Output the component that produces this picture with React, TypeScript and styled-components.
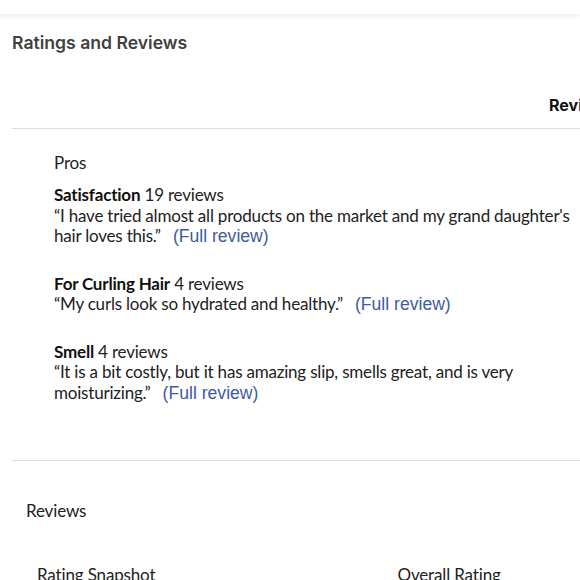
import styled, { createGlobalStyle } from "styled-components";

const Global = createGlobalStyle`
  html, body {
    margin: 0;
    padding: 0;
    background: #fff;
    overflow: hidden;
  }
  body {
    font-family: "Lato", "Noto Sans", sans-serif;
    color: #222;
  }
`;

// ── page chrome ───────────────────────────────────────────────────────────────

const TopBar = styled.div`
  height: 14px;
  background: #fff;
  box-shadow: 0 2px 5px rgba(0, 0, 0, 0.09);
`;

const Title = styled.h2`
  margin: 17px 0 0 12px;
  font-family: "Inter", "Roboto", sans-serif;
  font-size: 17.6px;
  font-weight: 600;
  line-height: 24px;
  color: #414141;
`;

const TabRow = styled.div`
  display: flex;
  padding: 40px 0 0 549px;
  height: 73px;
  box-sizing: border-box;
  white-space: nowrap;
`;

const Tab = styled.span`
  font-family: "Inter", "Roboto", sans-serif;
  font-size: 16px;
  font-weight: 700;
  line-height: 20px;
  color: #111;
`;

const Divider = styled.hr`
  margin: 0 0 0 12px;
  border: none;
  border-top: 1px solid #dcdcdc;
`;

// ── pros ──────────────────────────────────────────────────────────────────────

const Pros = styled.section`
  display: flex;
  flex-direction: column;
  gap: 27px;
  padding: 24px 0 57px 54px;
  letter-spacing: -0.2px;
`;

const Label = styled.div`
  font-size: 17px;
  line-height: 20px;
  color: #222;
  letter-spacing: -0.15px;
`;

const ProsLabel = styled(Label)`
  margin-bottom: -15px;
`;

const ProItem = styled.div`
  font-size: 17px;
  line-height: 20.5px;
  color: #222;
  white-space: nowrap;
`;

const ProName = styled.strong`
  font-weight: 700;
  color: #111;
`;

const Quote = styled.div`
  white-space: normal;
  width: 540px;
`;

const FullLink = styled.a`
  margin-left: 12px;
  font-family: "Liberation Sans", Arial, sans-serif;
  font-size: 17.6px;
  letter-spacing: 0;
  color: #3e5b9f;
  text-decoration: none;
`;

// ── reviews ───────────────────────────────────────────────────────────────────

const Reviews = styled.section`
  padding: 40px 0 0 26px;
`;

const SnapshotRow = styled.div`
  display: flex;
  margin-top: 44px;
  padding-left: 11px;
`;

const SnapshotCol = styled.div<{ $w: number }>`
  width: ${(p) => p.$w}px;
  font-size: 17px;
  line-height: 20px;
  letter-spacing: -0.15px;
  color: #222;
  white-space: nowrap;
`;

const pros = [
  {
    name: "Satisfaction",
    count: 19,
    quote:
      "“I have tried almost all products on the market and my grand daughter's hair loves this.”",
  },
  {
    name: "For Curling Hair",
    count: 4,
    quote: "“My curls look so hydrated and healthy.”",
  },
  {
    name: "Smell",
    count: 4,
    quote:
      "“It is a bit costly, but it has amazing slip, smells great, and is very moisturizing.”",
  },
];

export default function App() {
  return (
    <>
      <Global />
      <TopBar />
      <Title>Ratings and Reviews</Title>
      <TabRow>
        <Tab>Reviews</Tab>
      </TabRow>
      <Divider />

      <Pros>
        <ProsLabel>Pros</ProsLabel>
        {pros.map((p) => (
          <ProItem key={p.name}>
            <ProName>{p.name}</ProName> {p.count} reviews
            <Quote>
              {p.quote}
              <FullLink href="#">(Full review)</FullLink>
            </Quote>
          </ProItem>
        ))}
      </Pros>

      <Divider />

      <Reviews>
        <Label>Reviews</Label>
        <SnapshotRow>
          <SnapshotCol $w={395}>Rating Snapshot</SnapshotCol>
          <SnapshotCol $w={200}>Overall Rating</SnapshotCol>
        </SnapshotRow>
      </Reviews>
    </>
  );
}
